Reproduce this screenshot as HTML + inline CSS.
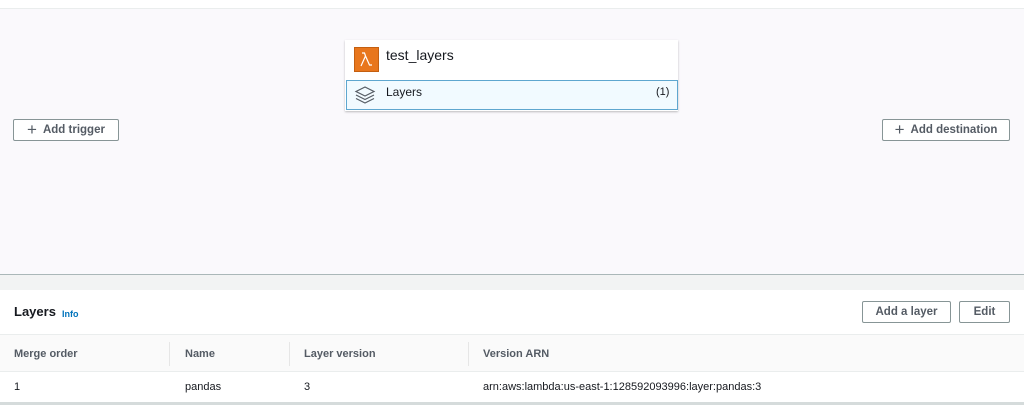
<!DOCTYPE html>
<html><head><style>
body{margin:0;width:1024px;height:405px;overflow:hidden;font-family:"Liberation Sans",sans-serif;background:#fff;position:relative;color:#16191f}
.a{position:absolute}
.btn{position:absolute;box-sizing:border-box;border:1px solid #879596;background:#fff;border-radius:2px;font-size:11.5px;font-weight:bold;color:#545b64;display:flex;align-items:center;justify-content:center}
.th{position:absolute;top:348px;font-size:11px;font-weight:bold;color:#545b64}
.td{position:absolute;top:381px;font-size:11px;color:#16191f}
.sep{position:absolute;top:342px;width:1px;height:24px;background:#e6e6e6}
</style></head><body>
<div class="a" style="left:0;top:8px;width:1024px;height:1px;background:#eaeded"></div>
<div class="a" style="left:0;top:9px;width:1024px;height:265px;background:#faf9fc"></div>
<div class="a" style="left:0;top:274px;width:1024px;height:1px;background:#aab7b8"></div>
<div class="a" style="left:0;top:275px;width:1024px;height:15px;background:#f2f3f3"></div>
<div class="a" style="left:345px;top:40px;width:333px;height:71px;background:#fff;box-shadow:0 1px 2px rgba(0,0,0,.25)"></div>
<div class="a" style="left:354px;top:47px;width:25px;height:25px;background:#e8761c;border:1px solid #c45f10;box-sizing:border-box">
<svg width="23" height="23" viewBox="0 0 23 23"><path d="M6 18 L10.5 8 L9.5 5 L7 5 M10.5 8 L14.5 17 L17 17" fill="none" stroke="#fff" stroke-width="1.2"/></svg></div>
<div class="a" style="left:386px;top:47px;font-size:14px">test_layers</div>
<div class="a" style="left:346px;top:80px;width:332px;height:30px;box-sizing:border-box;background:#f1faff;border:1px solid #5ea6cf"></div>
<svg class="a" style="left:354px;top:84px" width="22" height="22" viewBox="0 0 22 22" fill="none" stroke="#545b64" stroke-width="1.2"><path d="M11 3 L20 7.5 L11 12 L2 7.5Z"/><path d="M2 11 L11 15.5 L20 11"/><path d="M2 14.5 L11 19 L20 14.5"/></svg>
<div class="a" style="left:386px;top:85px;font-size:12px">Layers</div>
<div class="a" style="left:656px;top:86px;font-size:11px">(1)</div>
<div class="btn" style="left:13px;top:119px;width:106px;height:22px"><span style="font-size:17px;font-weight:normal;margin-right:6px;color:#545b64">+</span>Add trigger</div>
<div class="btn" style="left:882px;top:119px;width:128px;height:22px"><span style="font-size:17px;font-weight:normal;margin-right:6px;color:#545b64">+</span>Add destination</div>
<div class="a" style="left:14px;top:304px;font-size:13px;font-weight:bold">Layers</div>
<div class="a" style="left:62px;top:309px;font-size:9px;font-weight:bold;color:#0073bb">Info</div>
<div class="btn" style="left:862px;top:301px;width:89px;height:22px">Add a layer</div>
<div class="btn" style="left:959px;top:301px;width:51px;height:22px">Edit</div>
<div class="a" style="left:0;top:334px;width:1024px;height:1px;background:#eaeded"></div>
<div class="a" style="left:0;top:335px;width:1024px;height:37px;background:#fafafa"></div>
<div class="a" style="left:0;top:371px;width:1024px;height:1px;background:#eaeded"></div>
<div class="sep" style="left:169px"></div><div class="sep" style="left:289px"></div><div class="sep" style="left:468px"></div>
<div class="th" style="left:14px">Merge order</div>
<div class="th" style="left:185px">Name</div>
<div class="th" style="left:304px">Layer version</div>
<div class="th" style="left:483px">Version ARN</div>
<div class="td" style="left:14px">1</div>
<div class="td" style="left:185px">pandas</div>
<div class="td" style="left:304px">3</div>
<div class="td" style="left:483px">arn:aws:lambda:us-east-1:128592093996:layer:pandas:3</div>
<div class="a" style="left:0;top:402px;width:1024px;height:3px;background:#d5dbdb"></div>
</body></html>
